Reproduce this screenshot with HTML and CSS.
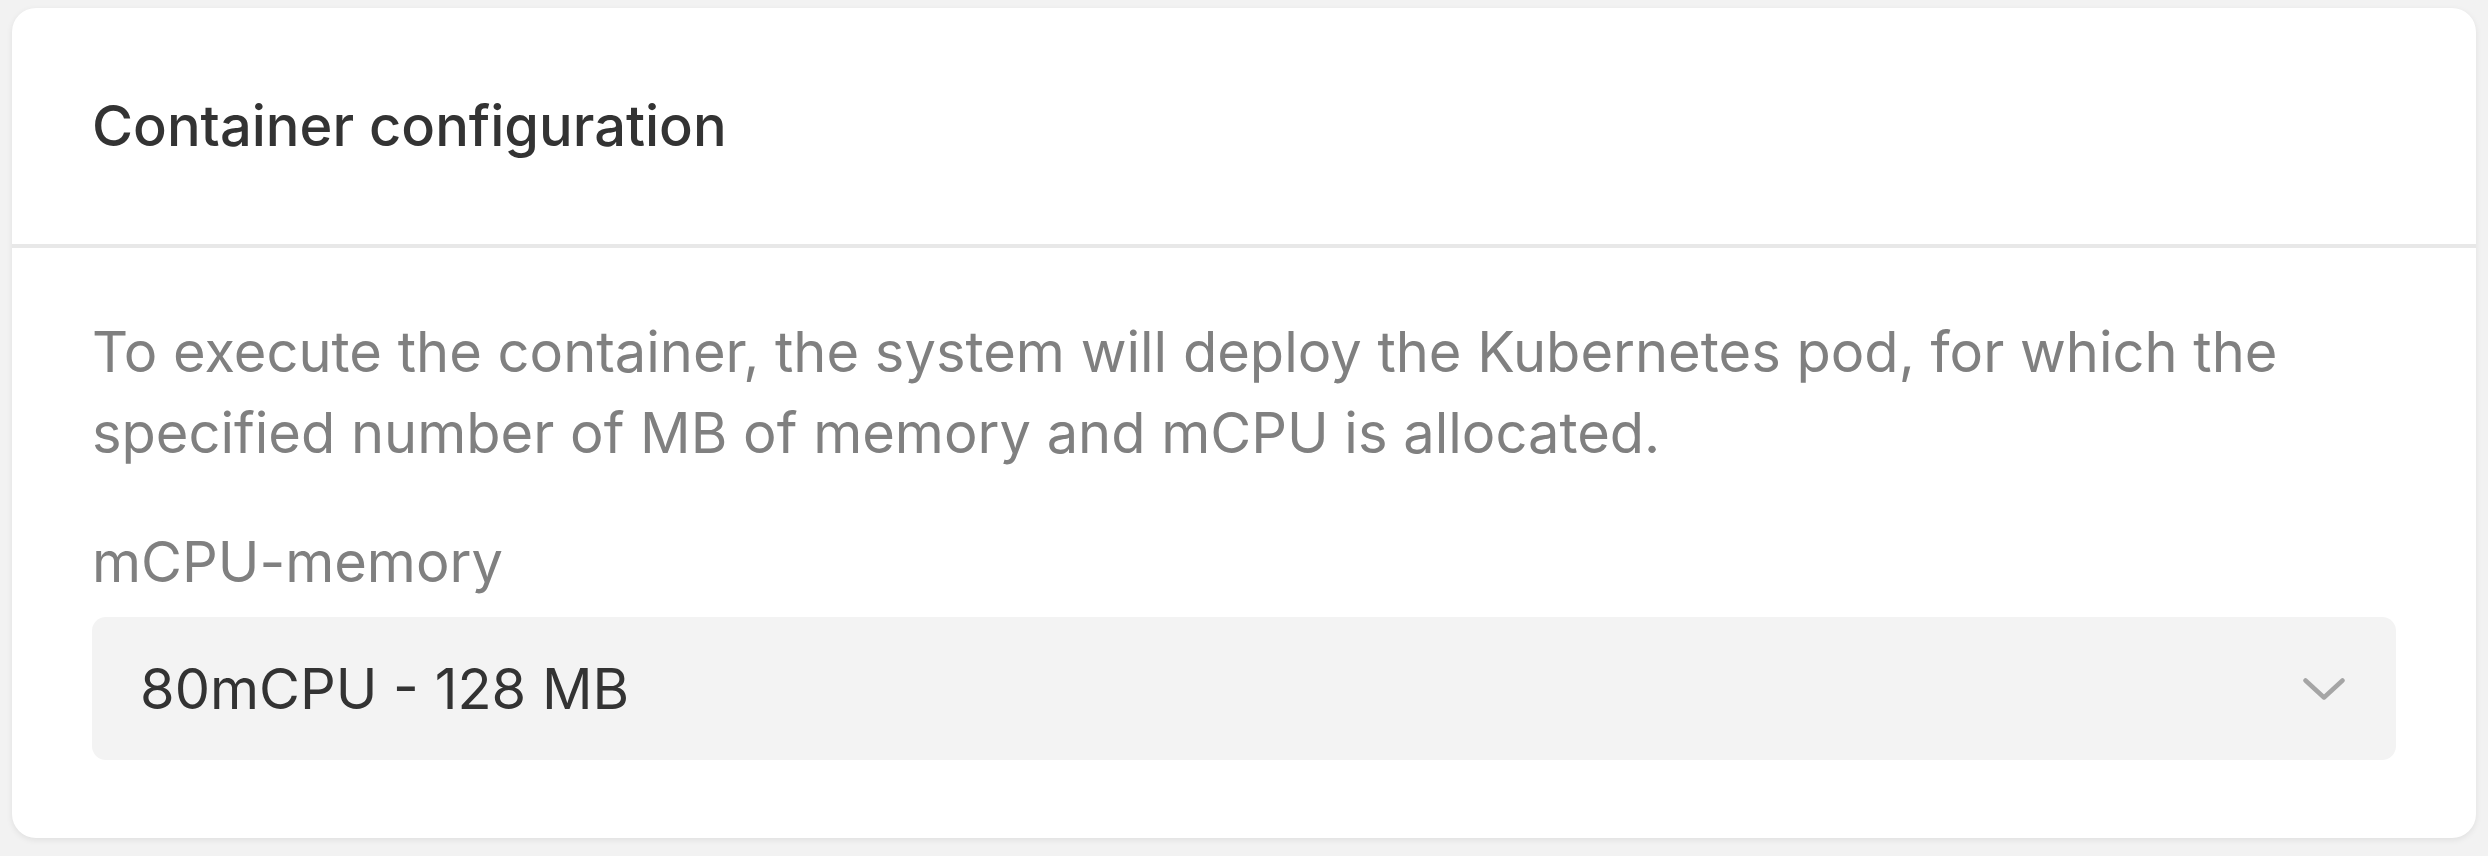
FILE: index.html
```html
<!DOCTYPE html>
<html lang="en">
<head>
  <meta charset="UTF-8" />
  <meta name="viewport" content="width=device-width, initial-scale=1.0"/>
  <title>Container configuration</title>
  <link rel="stylesheet" href="styles.css">
</head>
<body>

  <section class="card">
    <header class="card-header">
      <h2>Container configuration</h2>
    </header>

    <div class="card-body">
      <p class="hint">
        To execute the container, the system will deploy the Kubernetes pod, for which the
        specified number of MB of memory and mCPU is allocated.
      </p>

      <label class="field-label" for="resources">mCPU-memory</label>
      <div class="select" id="resources">
        <span class="select-value">80mCPU - 128 MB</span>
        <svg class="chevron" width="42" height="22" viewBox="0 0 42 22" fill="none">
          <path d="M2.5 2.5 L21 19.5 L39.5 2.5" stroke="#a5a5a5" stroke-width="4.5" stroke-linecap="round" stroke-linejoin="round"/>
        </svg>
      </div>
    </div>
  </section>

</body>
</html>
```

FILE: styles.css
```css
* {
  box-sizing: border-box;
  margin: 0;
  padding: 0;
  font-family: 'Inter', 'Noto Sans', sans-serif;
}

body {
  background-color: #f2f2f2;
  padding: 8px 12px 17px;
}

.card {
  background-color: white;
  border-radius: 24px;
  box-shadow: 0 2px 6px rgba(0,0,0,0.08);
  overflow: hidden;
}

.card-header {
  height: 240px;
  display: flex;
  align-items: center;
  padding: 0 80px;
  border-bottom: 4px solid #e8e8e8;
}

.card-header h2 {
  font-size: 56px;
  font-weight: 500;
  color: #333;
}

.card-body {
  padding: 64px 80px 78px;
}

.hint {
  font-size: 56px;
  line-height: 81px;
  color: #808080;
  margin-bottom: 48px;
}

.field-label {
  display: block;
  font-size: 56px;
  line-height: 81px;
  color: #808080;
  margin-bottom: 14px;
}

.select {
  height: 143px;
  background-color: #f3f3f3;
  border-radius: 14px;
  display: flex;
  align-items: center;
  justify-content: space-between;
  padding: 0 51px 0 48px;
}

.select-value {
  font-size: 56px;
  color: #333;
}

.chevron {
  display: block;
}
```
